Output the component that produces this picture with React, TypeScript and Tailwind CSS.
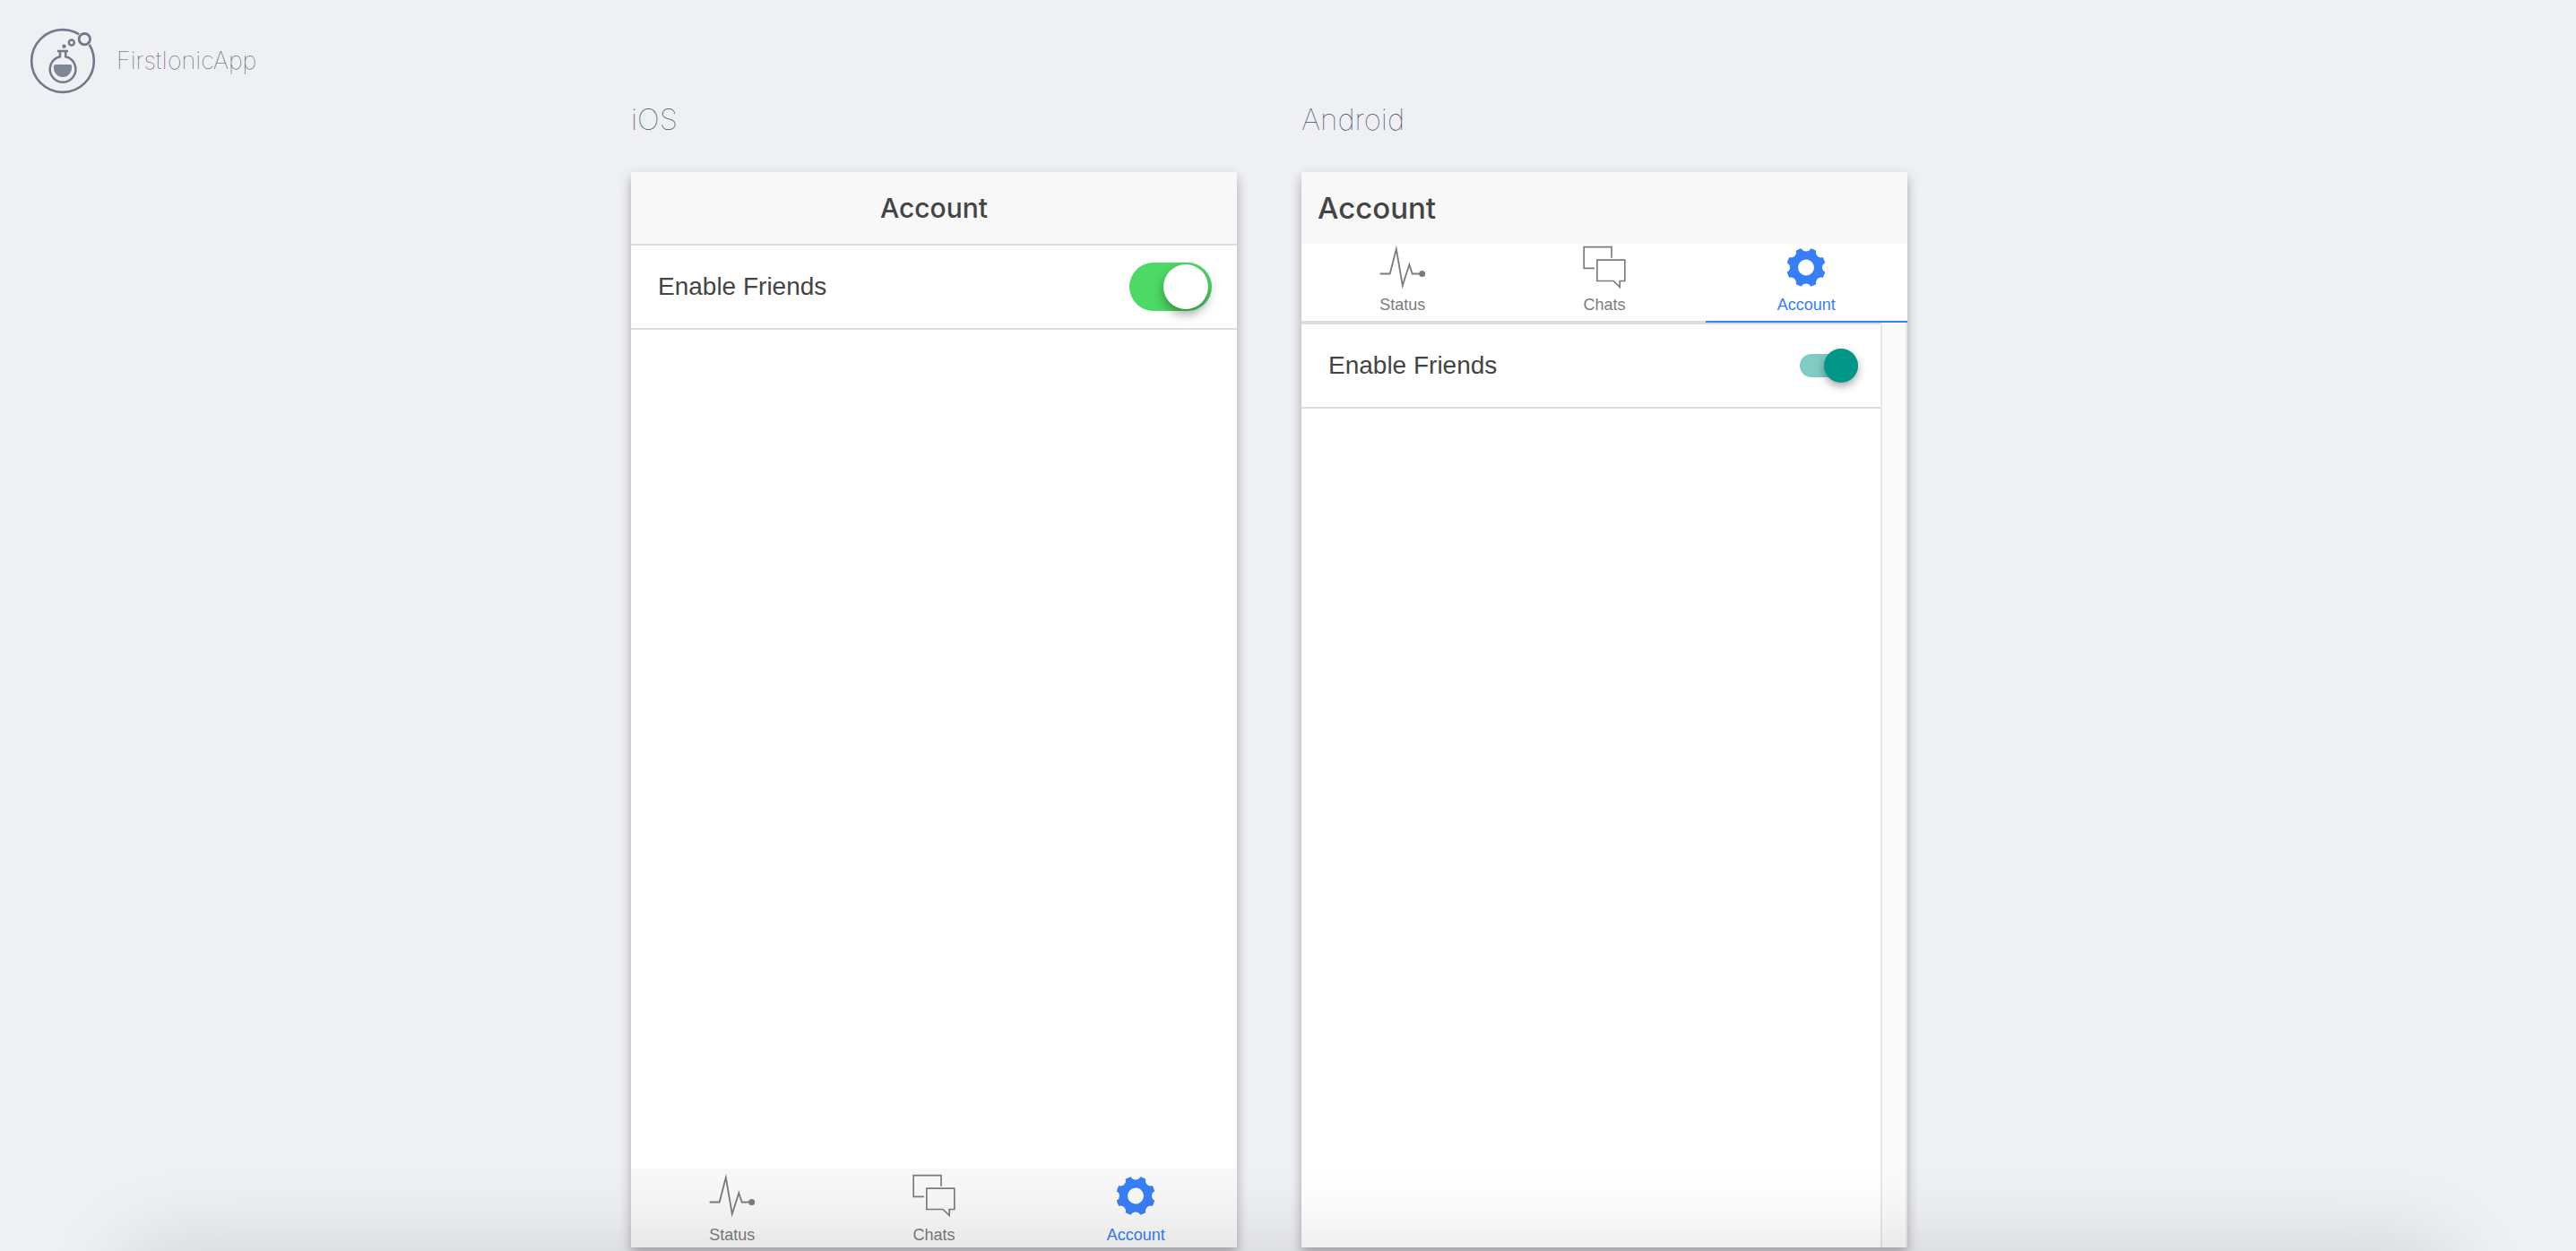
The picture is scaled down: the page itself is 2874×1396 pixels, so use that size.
import type { ReactNode } from "react";

const point = (radius: number, degrees: number) => {
  const a = (degrees * Math.PI) / 180;
  return `${(radius * Math.sin(a)).toFixed(2)} ${(-radius * Math.cos(a)).toFixed(2)}`;
};

// Eight teeth, separated by U-shaped notches on every multiple of 45 degrees.
const gearPath =
  `M${point(65.5, 13.5)}` +
  Array.from({ length: 8 }, (_, i) => {
    const base = i * 45;
    return `A65.5 65.5 0 0 1 ${point(65.5, base + 31.5)}C${point(52, base + 33)} ${point(52, base + 57)} ${point(65.5, base + 58.5)}`;
  }).join("") +
  "ZM27 0A27 27 0 1 0 -27 0A27 27 0 1 0 27 0Z";

function PulseIcon() {
  return (
    <svg viewBox="146 36 156 150" className="h-[50px] w-[52px]" aria-hidden="true">
      <path
        d="M148 136.500H181L202.500 54L223.500 176L246 106L256 136.500H284"
        fill="none"
        stroke="currentColor"
        strokeWidth="5.500"
        strokeMiterlimit="10"
      />
      <circle cx="289" cy="136.500" r="10.500" fill="currentColor" />
    </svg>
  );
}

function ChatsIcon() {
  return (
    <svg viewBox="822 36 156 150" className="h-[50px] w-[52px]" aria-hidden="true">
      <g fill="none" stroke="currentColor" strokeWidth="5">
        <path d="M867 118H831.500V47H924V83" />
        <path d="M875.500 90.500H968.500V160.500H951.500V181L930 160.500H875.500Z" />
      </g>
    </svg>
  );
}

function GearIcon() {
  return (
    <svg viewBox="-78 -79.500 156 150" className="h-[50px] w-[52px]" aria-hidden="true">
      <path d={gearPath} fill="currentColor" fillRule="evenodd" />
    </svg>
  );
}

function LabLogo() {
  return (
    <svg viewBox="0 0 240 240" className="size-20 text-[#727a89]" aria-hidden="true">
      <g fill="none" stroke="currentColor">
        <circle cx="120" cy="120" r="104.500" strokeWidth="8" />
        <circle cx="193" cy="47" r="25" fill="#eff0f4" stroke="none" />
        <circle cx="193" cy="47" r="18.500" strokeWidth="8.500" />
        <circle cx="149.500" cy="58.500" r="9" strokeWidth="7.500" />
        <path
          d="M102 87H138M111 88V106A43 43 0 1 0 129.500 106V88"
          strokeWidth="7.500"
        />
      </g>
      <circle cx="124.500" cy="71" r="6.500" fill="currentColor" />
      <path
        d="M97 132H144Q151 132 150.500 141C150 160 138 174 120 174C102 174 90 160 89.500 141Q89 132 97 132Z"
        fill="currentColor"
        fillOpacity="0.900"
      />
    </svg>
  );
}

const tabs: { label: string; icon: ReactNode; active?: boolean }[] = [
  { label: "Status", icon: <PulseIcon /> },
  { label: "Chats", icon: <ChatsIcon /> },
  { label: "Account", icon: <GearIcon />, active: true },
];

const card =
  "flex flex-1 flex-col bg-white shadow-[0_6px_12px_rgba(0,0,0,0.3)] font-['Liberation_Sans',Arial,sans-serif] text-[#444]";

const platformName =
  "mb-[43px] font-[Inter,sans-serif] text-[33px] leading-8 font-thin text-[#4a5366]";

function IosPreview() {
  return (
    <section className="flex w-[676px] flex-col">
      <h2 className={platformName}>iOS</h2>
      <div className={card}>
        <header className="flex h-[82px] items-center justify-center border-b-2 border-[#ddd] bg-[#f8f8f8]">
          <h1 className="font-[Inter,sans-serif] text-[30px] leading-9 font-medium">Account</h1>
        </header>
        <label className="flex h-[94px] items-center justify-between border-b-2 border-[#ddd] pr-7 pl-[30px] text-[28px] leading-9">
          Enable Friends
          <input
            type="checkbox"
            defaultChecked
            className="flex h-[54px] w-[92px] appearance-none items-center rounded-full bg-gray-200 px-1 before:size-[50px] before:rounded-full before:bg-white before:shadow-[0_6px_12px_rgba(0,0,0,0.35)] checked:justify-end checked:bg-[#4cd964]"
          />
        </label>
        <div className="flex-1" />
        <nav className="grid h-[88px] grid-cols-3 bg-[#f8f8f8]">
          {tabs.map((tab) => (
            <button
              key={tab.label}
              type="button"
              className={`flex flex-col items-center gap-2.5 pt-1 text-[18px] leading-5 ${
                tab.active ? "text-[#387ef5]" : "text-[#7c7c7c]"
              }`}
            >
              {tab.icon}
              {tab.label}
            </button>
          ))}
        </nav>
      </div>
    </section>
  );
}

function AndroidPreview() {
  return (
    <section className="flex w-[676px] flex-col">
      <h2 className={platformName}>Android</h2>
      <div className={card}>
        <header className="flex h-20 items-center bg-[#f8f8f8] px-[18px]">
          <h1 className="font-[Inter,sans-serif] text-[33px] leading-9 font-medium">Account</h1>
        </header>
        <nav className="grid h-[88px] grid-cols-3">
          {tabs.map((tab) => (
            <button
              key={tab.label}
              type="button"
              className={`flex flex-col items-center gap-2 border-b-2 text-[18px] leading-5 ${
                tab.active ? "border-[#387ef5] text-[#387ef5]" : "border-[#ddd] text-[#7c7c7c]"
              }`}
            >
              {tab.icon}
              {tab.label}
            </button>
          ))}
        </nav>
        <div className="flex flex-1">
          <div className="flex-1">
            <label className="flex h-24 items-center justify-between border-y-2 border-[#ddd] pr-[25px] pl-[30px] text-[28px] leading-9">
              Enable Friends
              <input
                type="checkbox"
                defaultChecked
                className="flex h-[26px] w-[65px] appearance-none items-center rounded-full bg-gray-300 before:size-[38px] before:shrink-0 before:rounded-full before:bg-white before:shadow-[0_4px_10px_rgba(0,0,0,0.35)] checked:justify-end checked:bg-[#80cbc4] checked:before:bg-[#009688]"
              />
            </label>
          </div>
          <div className="w-[30px] border-x-2 border-[#e8e8e8] bg-[#fafafa]" />
        </div>
      </div>
    </section>
  );
}

export default function App() {
  return (
    <div className="flex min-h-screen flex-col overflow-hidden bg-[#eff0f4]">
      <header className="flex items-center gap-5 pt-7 pl-[30px]">
        <LabLogo />
        <span className="font-[Inter,sans-serif] text-[27px] leading-8 font-thin text-[#4a5366]">FirstIonicApp</span>
      </header>
      <main className="flex flex-1 justify-center gap-[72px] pt-[9px] pr-[42px] pb-1">
        <IosPreview />
        <AndroidPreview />
      </main>
      <div className="pointer-events-none fixed inset-x-[5%] top-full h-40 shadow-[0_0_100px_rgba(0,0,0,0.14)]" />
    </div>
  );
}
